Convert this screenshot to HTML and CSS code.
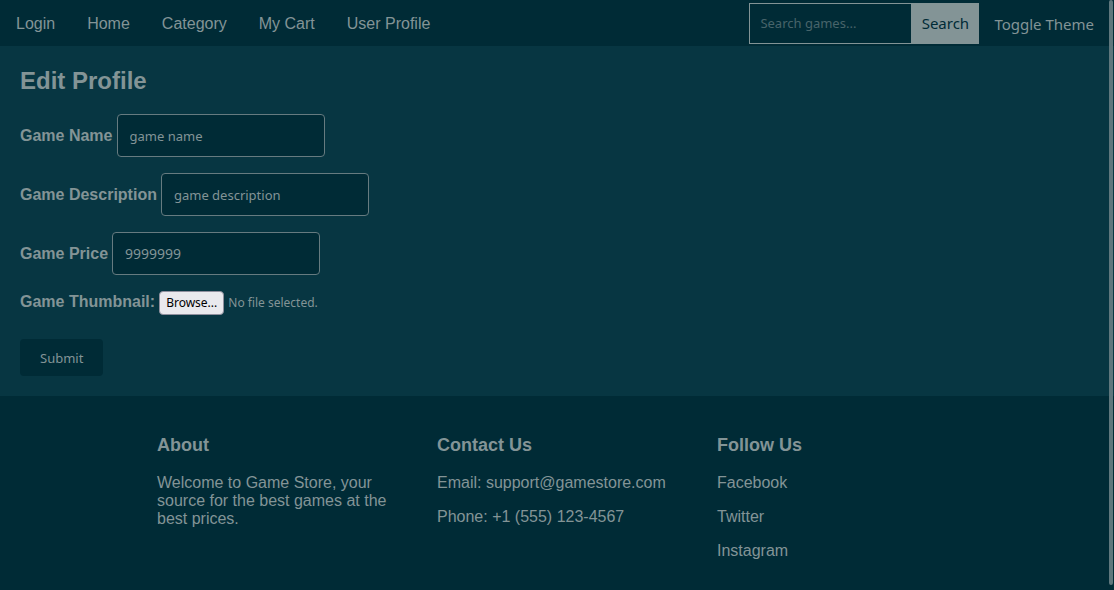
FILE: index.html
```html
<!DOCTYPE html>
<html lang="en">
<head>
<meta charset="utf-8">
<meta name="viewport" content="width=device-width, initial-scale=1">
<title>Edit Profile</title>
<link rel="stylesheet" href="styles.css">
</head>
<body>
<header class="topbar">
  <nav class="nav">
    <a href="#login">Login</a>
    <a href="#home">Home</a>
    <a href="#category">Category</a>
    <a href="#cart">My Cart</a>
    <a href="#profile">User Profile</a>
  </nav>
  <form class="search">
    <input class="search-input" type="text" placeholder="Search games..." aria-label="Search games">
    <button class="search-button" type="button">Search</button>
  </form>
  <button class="theme-toggle" type="button">Toggle Theme</button>
</header>
<main class="main">
  <h2 class="title">Edit Profile</h2>
  <form class="form">
    <div class="field">
      <label for="name">Game Name</label>
      <input class="text-input" id="name" type="text" value="game name">
    </div>
    <div class="field">
      <label for="description">Game Description</label>
      <input class="text-input" id="description" type="text" value="game description">
    </div>
    <div class="field">
      <label for="price">Game Price</label>
      <input class="text-input number-input" id="price" type="text" inputmode="numeric" value="9999999">
    </div>
    <div class="field">
      <label for="thumbnail">Game Thumbnail:</label>
      <input class="file-input" id="thumbnail" type="file">
      <label class="browse" for="thumbnail">Browse...</label>
      <span class="file-status">No file selected.</span>
    </div>
    <button class="submit" type="button">Submit</button>
  </form>
</main>
<footer class="footer">
  <section class="column">
    <h3>About</h3>
    <p>Welcome to Game Store, your source for the best games at the best prices.</p>
  </section>
  <section class="column">
    <h3>Contact Us</h3>
    <p>Email: support@gamestore.com</p>
    <p>Phone: +1 (555) 123-4567</p>
  </section>
  <section class="column">
    <h3>Follow Us</h3>
    <p><a href="#facebook">Facebook</a></p>
    <p><a href="#twitter">Twitter</a></p>
    <p><a href="#instagram">Instagram</a></p>
  </section>
</footer>
<div class="scroll-thumb"></div>
</body>
</html>
```

FILE: styles.css
```css
:root {
  --dark: #002b36;
  --panel: #073642;
  --text: #839496;
  --control-font: "Noto Sans", "Open Sans", sans-serif;
}

* {
  box-sizing: border-box;
}

body {
  display: flex;
  flex-direction: column;
  min-height: 100vh;
  margin: 0;
  background: var(--panel);
  color: var(--text);
  font: 16px/18px "Liberation Sans", Arial, sans-serif;
}

a {
  color: inherit;
  text-decoration: none;
}

input,
button {
  margin: 0;
  color: inherit;
  font-family: var(--control-font);
}

.topbar {
  display: flex;
  align-items: center;
  min-height: 46px;
  padding: 0 20px 0 16px;
  background: var(--dark);
}

.nav {
  display: flex;
  flex: 1;
  gap: 32px;
  line-height: 20px;
  padding-top: 2px;
}

.search {
  display: flex;
  height: 41px;
}

.search-input {
  width: 162px;
  padding: 0 10px;
  border: 1px solid var(--text);
  border-right: 0;
  border-radius: 0;
  background: var(--dark);
  font-size: 13px;
}

.search-input::placeholder {
  color: var(--text);
  opacity: 0.54;
}

.search-button {
  width: 68px;
  padding: 0;
  border: 0;
  background: var(--text);
  color: var(--dark);
  font-size: 15px;
}

.theme-toggle {
  margin-left: 15px;
  padding: 2px 0 0;
  border: 0;
  background: none;
  font-size: 15px;
}

.main {
  padding: 20px;
}

.title {
  margin: 0 0 19px;
  padding-top: 1px;
  font-size: 24px;
  line-height: 28px;
}

.form {
  display: flex;
  flex-direction: column;
  align-items: flex-start;
  gap: 16px;
}

.field {
  position: relative;
  display: flex;
  align-items: baseline;
  gap: 4px;
  font-weight: bold;
}

.text-input {
  width: 208px;
  height: 43px;
  padding: 0 12px;
  border: 1px solid #667b80;
  border-radius: 4px;
  background: var(--dark);
  font-size: 13px;
}

.number-input {
  font-size: 14px;
}

.file-input {
  position: absolute;
  width: 1px;
  height: 1px;
  opacity: 0;
}

.browse {
  padding: 1px 6px;
  border: 1px solid #8f8f9d;
  border-radius: 4px;
  background: #e9e9ed;
  color: #000;
  font: 12px/20px var(--control-font);
}

.file-status {
  font: 12px/20px var(--control-font);
}

.submit {
  height: 37px;
  margin-top: 8px;
  padding: 0 20px;
  border: 0;
  border-radius: 4px;
  background: var(--dark);
  font-size: 13px;
}

.footer {
  display: flex;
  flex: 1;
  justify-content: center;
  gap: 40px;
  padding: 39px 20px 20px;
  background: var(--dark);
}

.column {
  width: 240px;
}

.column h3 {
  margin: 0 0 18px;
  font-size: 18px;
  line-height: 21px;
}

.column p {
  margin: 0 0 16px;
}

.scroll-thumb {
  position: absolute;
  top: 0;
  right: 1px;
  bottom: 5px;
  width: 4px;
  border-radius: 2px;
  background: #5f777d;
  pointer-events: none;
}
```
